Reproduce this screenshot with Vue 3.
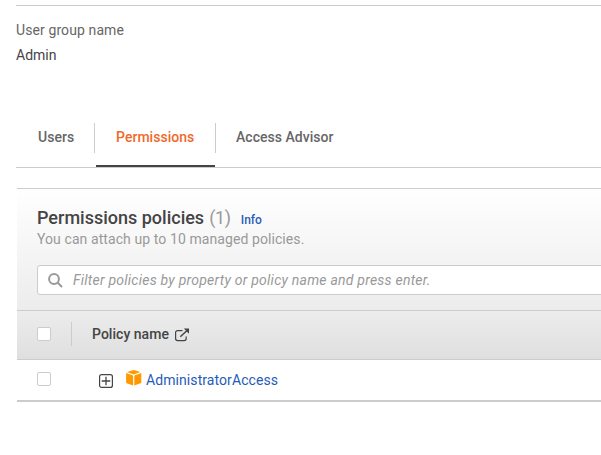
<script setup>
const tabs = [
  { id: 'users', label: 'Users' },
  { id: 'permissions', label: 'Permissions' },
  { id: 'advisor', label: 'Access Advisor' },
]
const active = 'permissions'
const policies = [{ name: 'AdministratorAccess' }]
</script>

<template>
  <main class="page">
    <section class="summary">
      <div class="label">User group name</div>
      <div class="value">Admin</div>
    </section>

    <nav class="tabs">
      <a v-for="t in tabs" :key="t.id" class="tab" :class="[t.id, { active: t.id === active }]"><span>{{ t.label }}</span></a>
    </nav>

    <section class="panel">
      <header class="panel-head">
        <div class="title-row">
          <h2>Permissions policies</h2>
          <span class="count">({{ policies.length }})</span>
          <a class="info">Info</a>
        </div>
        <p class="desc">You can attach up to 10 managed policies.</p>
        <div class="search">
          <svg width="15" height="15" viewBox="0 0 15 15" fill="none" stroke="#999" stroke-width="2">
            <circle cx="6" cy="6" r="4.9" />
            <path d="M9.5 9.5L14 14" />
          </svg>
          <span class="placeholder">Filter policies by property or policy name and press enter.</span>
        </div>
      </header>
      <div class="thead">
        <i class="check"></i>
        <i class="divider"></i>
        <span class="col">Policy name</span>
        <svg class="ext" width="15" height="14" viewBox="0 0 15 14" fill="none" stroke="#444" stroke-width="1.2">
          <path d="M7.5 2.6H2.6a2 2 0 0 0-2 2v6a2 2 0 0 0 2 2h6.6a2 2 0 0 0 2-2V8.5" />
          <path d="M5.3 8.8L11.8 2.8" stroke-width="1.5" />
          <path d="M8.8 0.6H14v5.2z" fill="#444" stroke="none" />
        </svg>
      </div>
      <div v-for="p in policies" :key="p.name" class="row">
        <i class="check"></i>
        <svg class="expand" width="14" height="14" viewBox="0 0 14 14" fill="none" stroke="#444">
          <rect x="0.6" y="0.6" width="12.8" height="12.8" rx="2" stroke-width="1.2" />
          <path d="M7 2.7v8.6M2.7 7h8.6" stroke-width="1.3" />
        </svg>
        <svg class="cube" width="16" height="16" viewBox="0 0 16 16" fill="#ff9900">
          <path d="M1 2.1L7.7 0l6.7 2.1-6.7 2.4z" />
          <path d="M0.1 3L7.1 5.4v10L0.1 13z" />
          <path d="M15.3 3L8.3 5.4v10l7-2.4z" />
        </svg>
        <a class="name">{{ p.name }}</a>
      </div>
    </section>
  </main>
</template>

<style>
body { margin: 0; background: #fff; overflow: hidden; }
</style>

<style scoped>
.page { box-sizing: border-box; width: 601px; height: 455px; padding: 5px 0 0 16px; overflow: hidden; font-family: Roboto, sans-serif; font-size: 14px; line-height: 20px; color: #444; white-space: nowrap; }
.summary { box-sizing: border-box; height: 118px; border-top: 1px solid #ccc; padding-top: 14px; }
.label { color: #666; letter-spacing: 0.1px; }
.value { margin-top: 5px; }
.tabs { display: flex; box-sizing: border-box; height: 45px; border-bottom: 1px solid #ccc; }
.tab { display: flex; box-sizing: border-box; height: 44px; font-weight: 500; color: #666; letter-spacing: 0.03px; }
.tab span { box-sizing: border-box; height: 30px; padding-top: 4px; }
.users { width: 80px; }
.users span { width: 79px; padding-left: 22px; border-right: 1px solid #ccc; }
.permissions { width: 119px; border-bottom: 2px solid #444; }
.permissions span { padding-left: 20px; }
.advisor span { padding-left: 20px; border-left: 1px solid #ccc; }
.active { color: #f0692a; }
.panel { margin: 20px 0 0 1px; border-top: 1px solid #ccc; border-bottom: 2px solid #ccc; }
.panel-head { box-sizing: border-box; height: 121px; padding: 17px 0 0 20px; background: linear-gradient(#fff, #ececec); }
.title-row { display: flex; align-items: baseline; height: 23px; line-height: 24px; }
h2 { margin: 0; font-size: 18px; font-weight: 500; }
.count { margin-left: 5px; font-size: 18px; color: #999; letter-spacing: -0.3px; }
.info { margin-left: 10px; font-size: 12px; font-weight: 500; color: #2a5db8; }
.desc { margin: 0; height: 36px; color: #999; letter-spacing: 0.085px; }
.search { display: flex; align-items: center; box-sizing: border-box; width: 600px; height: 30px; padding-left: 10px; border: 1px solid #ccc; border-radius: 3px; background: #fff; }
.placeholder { margin-left: 10px; font-style: italic; color: #999; letter-spacing: 0.235px; }
.thead { display: flex; align-items: center; box-sizing: border-box; height: 50px; padding: 0 0 2px 20px; border-top: 1px solid #ccc; border-bottom: 1px solid #ccc; background: linear-gradient(#ececec, #dfdfdf); }
.check { box-sizing: border-box; width: 14px; height: 14px; border: 1px solid #ccc; border-radius: 2px; background: #fff; }
.divider { width: 1px; height: 24px; margin-left: 20px; background: #ccc; }
.col { margin-left: 20px; font-weight: 500; letter-spacing: 0.03px; }
.ext { margin: 2px 0 0 6px; }
.row { display: flex; align-items: center; height: 40px; padding-left: 20px; }
.row .check { margin-bottom: 2px; }
.expand { margin: 2px 0 0 48px; }
.cube { margin: 0 0 4px 13px; }
.name { margin-left: 4px; color: #1f5cb8; letter-spacing: 0.08px; }
</style>
